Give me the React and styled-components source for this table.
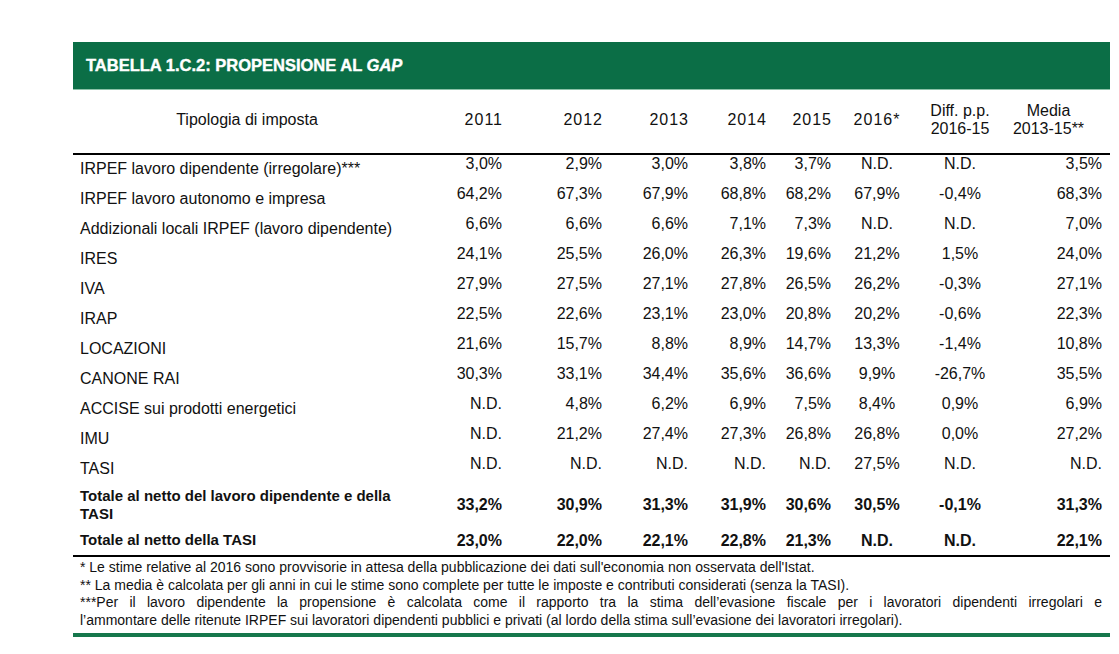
import React from 'react';
import styled, { createGlobalStyle } from 'styled-components';

const GlobalStyle = createGlobalStyle`
  html, body {
    margin: 0;
    padding: 0;
    background: #ffffff;
  }
  body {
    font-family: "Liberation Sans", Arial, sans-serif;
    color: #111111;
  }
`;

const Page = styled.div`
  width: 1037px;
  padding: 42px 0 0 73px;
`;

const TitleBar = styled.div`
  height: 47px;
  background: #0b6e46;
  border-bottom: 1px solid #8cc2a8;
  display: flex;
  align-items: center;
  padding-left: 13px;
`;

const Title = styled.h2`
  margin: 0;
  color: #ffffff;
  font-family: "Liberation Sans", Arial, sans-serif;
  font-weight: 700;
  font-size: 16.5px;
  -webkit-text-stroke: 0.4px #ffffff;

  em {
    font-style: italic;
  }
`;

const COLUMNS = '348px 89px 100px 86px 78px 65px 76px 90px 105px';

const HeaderRow = styled.div`
  display: grid;
  grid-template-columns: ${COLUMNS};
  height: 63px;
  border-bottom: 2px solid #000000;
  align-items: center;
  font-size: 16px;
  line-height: 18px;
`;

const HeadCell = styled.div`
  text-align: ${(p) => p.$align || 'right'};
  padding: ${(p) => p.$pad || '0 7px 4px'};
  letter-spacing: ${(p) => (p.$num ? '1px' : 'normal')};
`;

const Row = styled.div`
  display: grid;
  grid-template-columns: ${COLUMNS};
  height: ${(p) => p.$height || 30}px;
  align-items: ${(p) => (p.$bold ? 'center' : 'start')};
  font-size: 16px;
  line-height: 16px;
  font-weight: ${(p) => (p.$bold ? 700 : 400)};
`;

const Label = styled.div`
  padding: ${(p) => (p.$bold ? '0 7px' : '5px 7px 0')};
  font-size: ${(p) => (p.$bold ? 15 : 16)}px;
  line-height: 18px;
`;

const Value = styled.div`
  text-align: ${(p) => p.$align || 'right'};
  padding: 0 8px;
  padding-top: ${(p) => (p.$bold ? `${p.$shift || 0}px` : '1px')};
`;

const Notes = styled.div`
  border-top: 2px solid #000000;
  border-bottom: 4px solid #16774c;
  padding: 2px 8px 4px 7px;
  font-size: 14px;
  line-height: 17.5px;
  color: #111111;

  p {
    margin: 0;
  }
`;

const JustifiedLine = styled.span`
  display: block;
  text-align: justify;
  text-align-last: justify;
`;

const headers = [
  { text: 'Tipologia di imposta', align: 'center' },
  { text: '2011', num: true },
  { text: '2012', num: true },
  { text: '2013', num: true },
  { text: '2014', num: true },
  { text: '2015', num: true },
  { text: '2016*', align: 'center', num: true },
  { text: ['Diff. p.p.', '2016-15'], align: 'center' },
  { text: ['Media', '2013-15**'], align: 'center', pad: '0 18px 4px 0' },
];

const rows = [
  ['IRPEF lavoro dipendente (irregolare)***', '3,0%', '2,9%', '3,0%', '3,8%', '3,7%', 'N.D.', 'N.D.', '3,5%'],
  ['IRPEF lavoro autonomo e impresa', '64,2%', '67,3%', '67,9%', '68,8%', '68,2%', '67,9%', '-0,4%', '68,3%'],
  ['Addizionali locali IRPEF (lavoro dipendente)', '6,6%', '6,6%', '6,6%', '7,1%', '7,3%', 'N.D.', 'N.D.', '7,0%'],
  ['IRES', '24,1%', '25,5%', '26,0%', '26,3%', '19,6%', '21,2%', '1,5%', '24,0%'],
  ['IVA', '27,9%', '27,5%', '27,1%', '27,8%', '26,5%', '26,2%', '-0,3%', '27,1%'],
  ['IRAP', '22,5%', '22,6%', '23,1%', '23,0%', '20,8%', '20,2%', '-0,6%', '22,3%'],
  ['LOCAZIONI', '21,6%', '15,7%', '8,8%', '8,9%', '14,7%', '13,3%', '-1,4%', '10,8%'],
  ['CANONE RAI', '30,3%', '33,1%', '34,4%', '35,6%', '36,6%', '9,9%', '-26,7%', '35,5%'],
  ['ACCISE sui prodotti energetici', 'N.D.', '4,8%', '6,2%', '6,9%', '7,5%', '8,4%', '0,9%', '6,9%'],
  ['IMU', 'N.D.', '21,2%', '27,4%', '27,3%', '26,8%', '26,8%', '0,0%', '27,2%'],
  ['TASI', 'N.D.', 'N.D.', 'N.D.', 'N.D.', 'N.D.', '27,5%', 'N.D.', 'N.D.'],
];

const totals = [
  { height: 40, shift: 0, cells: ['Totale al netto del lavoro dipendente e della TASI', '33,2%', '30,9%', '31,3%', '31,9%', '30,6%', '30,5%', '-0,1%', '31,3%'] },
  { height: 30, shift: 2, cells: ['Totale al netto della TASI', '23,0%', '22,0%', '22,1%', '22,8%', '21,3%', 'N.D.', 'N.D.', '22,1%'] },
];

// columns 2016* and Diff. are centred, the rest right-aligned
const alignFor = (i) => (i === 6 || i === 7 ? 'center' : 'right');

export default function App() {
  return (
    <>
      <GlobalStyle />
      <Page>
        <TitleBar>
          <Title>
            TABELLA 1.C.2: PROPENSIONE AL <em>GAP</em>
          </Title>
        </TitleBar>

        <HeaderRow>
          {headers.map((h, i) => (
            <HeadCell key={i} $align={h.align} $pad={h.pad} $num={h.num}>
              {Array.isArray(h.text)
                ? h.text.map((line) => <div key={line}>{line}</div>)
                : h.text}
            </HeadCell>
          ))}
        </HeaderRow>

        {rows.map((r) => (
          <Row key={r[0]}>
            <Label>{r[0]}</Label>
            {r.slice(1).map((v, i) => (
              <Value key={i} $align={alignFor(i + 1)}>
                {v}
              </Value>
            ))}
          </Row>
        ))}

        {totals.map((t) => (
          <Row key={t.cells[0]} $bold $height={t.height}>
            <Label $bold>{t.cells[0]}</Label>
            {t.cells.slice(1).map((v, i) => (
              <Value key={i} $bold $shift={t.shift} $align={alignFor(i + 1)}>
                {v}
              </Value>
            ))}
          </Row>
        ))}

        <Notes>
          <p>* Le stime relative al 2016 sono provvisorie in attesa della pubblicazione dei dati sull'economia non osservata dell'Istat.</p>
          <p>** La media è calcolata per gli anni in cui le stime sono complete per tutte le imposte e contributi considerati (senza la TASI).</p>
          <p>
            <JustifiedLine>
              ***Per il lavoro dipendente la propensione è calcolata come il rapporto tra la stima dell’evasione fiscale per i lavoratori dipendenti irregolari e
            </JustifiedLine>
            l’ammontare delle ritenute IRPEF sui lavoratori dipendenti pubblici e privati (al lordo della stima sull’evasione dei lavoratori irregolari).
          </p>
        </Notes>
      </Page>
    </>
  );
}
